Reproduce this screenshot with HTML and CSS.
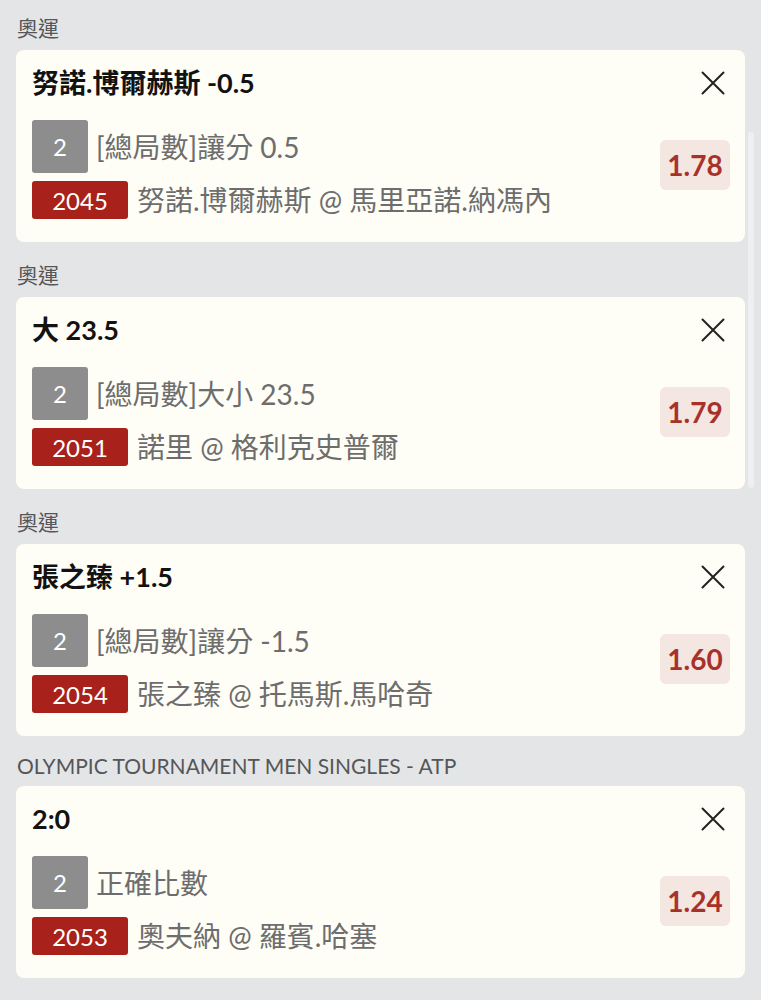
FILE: index.html
```html
<!DOCTYPE html>
<html lang="zh-Hant">
<head>
<meta charset="utf-8">
<title>投注單</title>
<link rel="stylesheet" href="styles.css">
</head>
<body>
<div class="page">
  <section class="group">
    <div class="league">奧運</div>
    <div class="card">
      <div class="card-head">
        <div class="title">努諾.博爾赫斯 -0.5</div>
        <svg class="close" viewBox="0 0 24 24" width="24" height="24"><path d="M1.5 1.5 L22.5 22.5 M22.5 1.5 L1.5 22.5" /></svg>
      </div>
      <div class="card-body">
        <div class="lines">
          <div class="line"><span class="tag tag-gray">2</span><span class="txt">[總局數]讓分 0.5</span></div>
          <div class="line"><span class="tag tag-red">2045</span><span class="txt">努諾.博爾赫斯 @ 馬里亞諾.納馮內</span></div>
        </div>
        <div class="odds">1.78</div>
      </div>
    </div>
  </section>
  <section class="group">
    <div class="league">奧運</div>
    <div class="card">
      <div class="card-head">
        <div class="title">大 23.5</div>
        <svg class="close" viewBox="0 0 24 24" width="24" height="24"><path d="M1.5 1.5 L22.5 22.5 M22.5 1.5 L1.5 22.5" /></svg>
      </div>
      <div class="card-body">
        <div class="lines">
          <div class="line"><span class="tag tag-gray">2</span><span class="txt">[總局數]大小 23.5</span></div>
          <div class="line"><span class="tag tag-red">2051</span><span class="txt">諾里 @ 格利克史普爾</span></div>
        </div>
        <div class="odds">1.79</div>
      </div>
    </div>
  </section>
  <section class="group">
    <div class="league">奧運</div>
    <div class="card">
      <div class="card-head">
        <div class="title">張之臻 +1.5</div>
        <svg class="close" viewBox="0 0 24 24" width="24" height="24"><path d="M1.5 1.5 L22.5 22.5 M22.5 1.5 L1.5 22.5" /></svg>
      </div>
      <div class="card-body">
        <div class="lines">
          <div class="line"><span class="tag tag-gray">2</span><span class="txt">[總局數]讓分 -1.5</span></div>
          <div class="line"><span class="tag tag-red">2054</span><span class="txt">張之臻 @ 托馬斯.馬哈奇</span></div>
        </div>
        <div class="odds">1.60</div>
      </div>
    </div>
  </section>
  <section class="group">
    <div class="league">OLYMPIC TOURNAMENT MEN SINGLES - ATP</div>
    <div class="card">
      <div class="card-head">
        <div class="title">2:0</div>
        <svg class="close" viewBox="0 0 24 24" width="24" height="24"><path d="M1.5 1.5 L22.5 22.5 M22.5 1.5 L1.5 22.5" /></svg>
      </div>
      <div class="card-body">
        <div class="lines">
          <div class="line"><span class="tag tag-gray">2</span><span class="txt">正確比數</span></div>
          <div class="line"><span class="tag tag-red">2053</span><span class="txt">奧夫納 @ 羅賓.哈塞</span></div>
        </div>
        <div class="odds">1.24</div>
      </div>
    </div>
  </section>
  <div class="scroll-thumb"></div>
</div>
</body>
</html>
```

FILE: styles.css
```css
html, body {
  margin: 0;
  padding: 0;
  background: #e4e5e7;
}
body {
  font-family: "Lato", "Noto Sans CJK TC", sans-serif;
  overflow: hidden;
  height: 1000px;
}
.page {
  position: relative;
  padding: 12px 16px 0 16px;
  display: flex;
  flex-direction: column;
  gap: 17px;
}
.group {
  display: flex;
  flex-direction: column;
}
.league {
  font-size: 21px;
  color: #555658;
  margin-bottom: 8px;
  padding-left: 1px;
}
.card {
  background: #fefdf6;
  border-radius: 8px;
  padding: 17px 15px 23px 16px;
  display: flex;
  flex-direction: column;
}
.card-head {
  display: flex;
  justify-content: space-between;
  align-items: center;
  height: 32px;
}
.title {
  font-size: 27px;
  font-weight: 700;
  color: #121212;
  line-height: 32px;
}
.close {
  width: 24px;
  height: 24px;
  margin-right: 5px;
  margin-top: -1px;
}
.close path {
  stroke: #222222;
  stroke-width: 2;
  stroke-linecap: round;
  fill: none;
}
.card-body {
  margin-top: 21px;
  display: flex;
  justify-content: space-between;
  align-items: flex-start;
}
.lines {
  display: flex;
  flex-direction: column;
  gap: 8px;
}
.line {
  display: flex;
  align-items: center;
  gap: 8px;
}
.tag {
  display: flex;
  align-items: center;
  justify-content: center;
  color: #ffffff;
  border-radius: 3px;
  font-size: 24px;
}
.tag-gray {
  width: 56px;
  height: 53px;
  background: #8d8d8d;
}
.tag-red {
  width: 96px;
  height: 38px;
  background: #a8211b;
}
.line:last-child {
  gap: 9px;
}
.txt {
  font-size: 28px;
  color: #6d6d6d;
  white-space: nowrap;
  line-height: 36px;
}
.odds {
  margin-top: 20px;
  width: 70px;
  height: 50px;
  border-radius: 6px;
  background: #f4e6e0;
  color: #a8322b;
  font-size: 28px;
  font-weight: 700;
  display: flex;
  align-items: center;
  justify-content: center;
}
.scroll-thumb {
  position: absolute;
  left: 748px;
  top: 132px;
  width: 6px;
  height: 356px;
  border-radius: 3px;
  background: #eeeff0;
}
```
